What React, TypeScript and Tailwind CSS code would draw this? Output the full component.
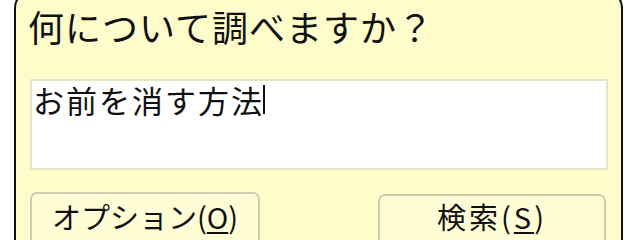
import React from "react";

const font = { fontFamily: '"Noto Sans CJK JP", "Noto Sans", sans-serif' };

export default function App() {
  return (
    <div
      className="w-[640px] h-[240px] bg-white overflow-hidden"
      style={font}
    >
      <div className="ml-[14px] mt-[-10px] w-[609px] h-[270px] rounded-t-[18px] border-x-2 border-t-2 border-[#111] bg-[#fffccc] pl-[14px] pr-[13px] pt-[14px]">
        <div className="h-[73px] text-[36px] leading-[40px] text-[#111] tracking-[1px] -ml-[2px]">
          何について調べますか？
        </div>
        <div className="h-[91px] border-2 border-[#e8e4c6] bg-white px-[1px] pt-[1px] text-[31px] leading-[36px] tracking-[2px] text-[#111] flex items-start">
          <span>お前を消す方法</span>
          <span className="mt-[3px] ml-[-1px] inline-block w-[2px] h-[29px] bg-[#111]" />
        </div>
        <div className="mt-[22px] flex justify-between pr-[2px]">
          <div className="w-[230px] h-[60px] rounded-[7px] border-2 border-[#cfcbb0] bg-[#fffdd6] text-center pt-[4px] text-[29px] leading-[36px] text-[#111]">
            オプション(<span className="underline underline-offset-[3px]">O</span>)
          </div>
          <div className="mt-[2px] w-[228px] h-[60px] rounded-[7px] border-2 border-[#cfcbb0] bg-[#fffdd6] text-center pt-[2px] text-[29px] leading-[36px] tracking-[3px] text-[#111]">
            検索(<span className="underline underline-offset-[3px]">S</span>)
          </div>
        </div>
      </div>
    </div>
  );
}
